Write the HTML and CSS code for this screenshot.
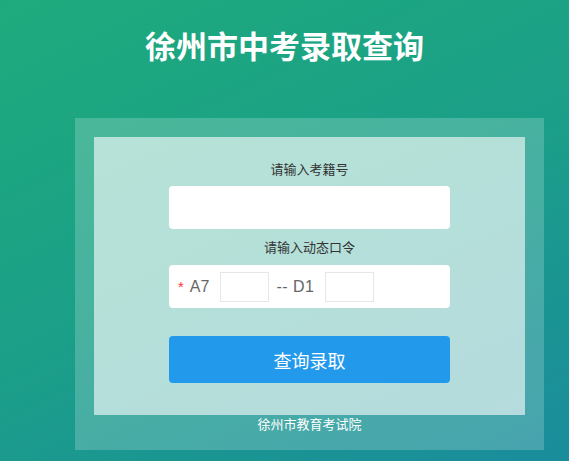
FILE: index.html
```html
<!DOCTYPE html>
<html lang="zh-CN">
<head>
    <meta charset="UTF-8">
    <meta name="viewport" content="width=device-width, initial-scale=1.0">
    <title>徐州市中考录取查询</title>
    <link rel="stylesheet" href="styles.css">
</head>
<body>
    <h1 class="page-title">徐州市中考录取查询</h1>

    <div class="query-box">
        <form class="query-form">
            <label class="form-label" for="ksh">请输入考籍号</label>
            <input type="text" id="ksh" class="form-input">

            <label class="form-label">请输入动态口令</label>
            <div class="code-row">
                <span class="required">*</span>
                <span class="code-name">A7</span>
                <input type="text" class="code-input">
                <span class="code-name code-sep">-- D1</span>
                <input type="text" class="code-input">
            </div>

            <button type="button" class="query-button">查询录取</button>
        </form>
        <p class="query-footer">徐州市教育考试院</p>
    </div>
</body>
</html>
```

FILE: styles.css
```css
* {
    margin: 0;
    padding: 0;
    box-sizing: border-box;
}

body {
    font-family: "Noto Sans CJK SC", "Microsoft YaHei", sans-serif;
    background: linear-gradient(155deg, #1eab7c 0%, #1b9f88 50%, #1a8c9c 100%);
    min-height: 100vh;
    color: #333333;
    overflow: hidden;
}

.page-title {
    text-align: center;
    font-size: 31px;
    font-weight: 700;
    line-height: 40px;
    color: #ffffff;
    padding-top: 25px;
}

.query-box {
    margin: 53px 0 0 75px;
    width: 469px;
    padding: 19px 19px 0;
    background: rgba(255, 255, 255, 0.2);
}

.query-form {
    display: flex;
    flex-direction: column;
    align-items: center;
    background: rgba(255, 255, 255, 0.6);
    padding: 22px 0 32px;
}

.form-label {
    font-size: 13px;
    line-height: 20px;
    color: #333333;
}

.form-input {
    width: 281px;
    height: 43px;
    border: none;
    border-radius: 4px;
    background: #ffffff;
    margin: 7px 0 8px;
    outline: none;
}

.code-row {
    width: 281px;
    height: 43px;
    border-radius: 4px;
    background: #ffffff;
    margin-top: 8px;
    display: flex;
    align-items: center;
    padding-left: 9px;
    font-family: "Liberation Sans", Arial, sans-serif;
    font-size: 16px;
    color: #666666;
}

.required {
    color: #ff3333;
    font-size: 15px;
    margin-right: 6px;
}

.code-input {
    width: 49px;
    height: 30px;
    border: 1px solid #e6e6e6;
    margin: 0 7px 0 11px;
    outline: none;
}

.code-sep {
    letter-spacing: 0.5px;
}

.query-button {
    width: 281px;
    height: 47px;
    margin-top: 28px;
    border: none;
    border-radius: 4px;
    background: #2299ea;
    color: #ffffff;
    font-family: inherit;
    font-size: 18px;
    cursor: pointer;
}

.query-footer {
    text-align: center;
    font-size: 13px;
    line-height: 18px;
    color: #ffffff;
    padding-bottom: 17px;
}
```
